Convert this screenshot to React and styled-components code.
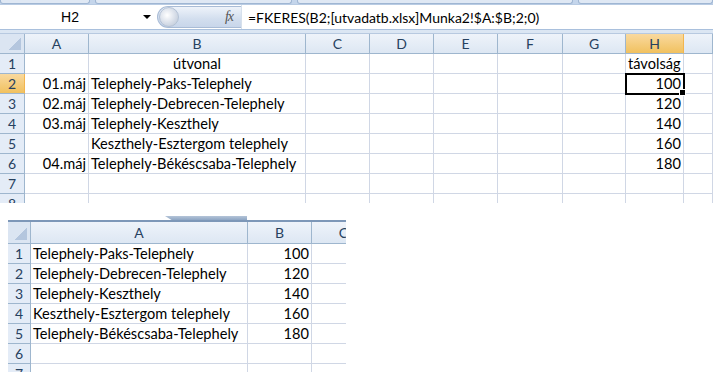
import React from 'react';
import styled, { createGlobalStyle, css } from 'styled-components';

const Global = createGlobalStyle`
  html, body { margin: 0; padding: 0; background: #fff; }
  body { font-family: "Liberation Sans", Arial, sans-serif; }
`;

const Page = styled.div`
  width: 713px;
  height: 372px;
  overflow: hidden;
  display: flex;
  flex-direction: column;
  background: #fff;
`;

const TopStrip = styled.div`
  height: 4px;
  display: flex;
  gap: 5px;
  background: #c4d5eb;
  overflow: hidden;
`;
const StripTab = styled.div`
  width: ${(p) => p.w}px;
  flex-shrink: 0;
  height: 3px;
  background: #dfe8f4;
  border: 1px solid #9fb6d3;
  border-top: none;
  border-radius: 0 0 3px 3px;
`;

const FormulaBar = styled.div`
  height: 24px;
  display: flex;
  align-items: center;
  background: #fff;
  border-top: 1px solid #b8cbe3;
`;
const NameBox = styled.div`
  width: 155px;
  height: 100%;
  display: flex;
  align-items: center;
  font-size: 14px;
  color: #000;
`;
const NameText = styled.span`
  width: 140px;
  text-align: center;
`;
const Arrow = styled.span`
  width: 0;
  height: 0;
  border-left: 4px solid transparent;
  border-right: 4px solid transparent;
  border-top: 4px solid #000;
  margin-left: 3px;
`;
const Pill = styled.div`
  width: 84px;
  height: 22px;
  margin-left: 2px;
  border-radius: 11px 0 0 11px;
  background: linear-gradient(#eef3fa, #d2deee 60%, #c8d6ea);
  border: 1px solid #a9bcd6;
  border-right: none;
  display: flex;
  align-items: center;
  justify-content: space-between;
  padding-right: 8px;
  box-sizing: border-box;
`;
const Knob = styled.span`
  width: 18px;
  height: 18px;
  margin-left: 1px;
  border-radius: 50%;
  background: radial-gradient(circle at 40% 40%, #ffffff, #d6dde8 55%, #b9c4d3);
  border: 1px solid #b4c2d6;
`;
const Fx = styled.span`
  font-family: "Liberation Serif", serif;
  font-style: italic;
  font-size: 14px;
  color: #555;
  letter-spacing: -1px;
`;
const Formula = styled.div`
  flex: 1;
  height: 100%;
  display: flex;
  align-items: center;
  padding-left: 6px;
  font-family: "Lato", "Liberation Sans", sans-serif;
  font-size: 14px;
  color: #000;
  border-left: 1px solid #d6e0ec;
`;

const Band = styled.div`
  height: 3px;
  background: #dbe6f3;
  border-top: 1px solid #a9c0dd;
  border-bottom: 1px solid #b7c9e0;
`;

const Sheet = styled.div`
  display: grid;
  grid-template-columns: ${(p) => p.cols};
  grid-auto-rows: 20px;
  height: ${(p) => p.h}px;
  overflow: hidden;
  font-family: "Lato", "Liberation Sans", sans-serif;
  font-size: 14.6px;
  ${(p) =>
    p.headerH &&
    css`
      grid-template-rows: ${p.headerH}px;
    `}
`;

const Head = styled.div`
  background: ${(p) =>
    p.sel
      ? 'linear-gradient(#f9d99f, #f1c15f)'
      : 'linear-gradient(#eef3fa, #dde7f3)'};
  border-right: 1px solid ${(p) => (p.sel ? '#f2b54f' : '#9eb6ce')};
  border-bottom: 1px solid #9eb6ce;
  color: #27415f;
  font-size: 14px;
  display: flex;
  align-items: center;
  justify-content: center;
  overflow: hidden;
  white-space: nowrap;
`;
const RowHead = styled(Head)`
  background: ${(p) => (p.sel ? 'linear-gradient(#f9d99f, #f1c15f)' : '#e4ecf7')};
`;
const Corner = styled.div`
  background: #dbe5f2;
  border-right: 1px solid #9eb6ce;
  border-bottom: 1px solid #9eb6ce;
  position: relative;
  &::after {
    content: '';
    position: absolute;
    right: 3px;
    bottom: 3px;
    width: 12px;
    height: 12px;
    background: linear-gradient(135deg, transparent 50%, #b4c6de 50%);
  }
`;
const Cell = styled.div`
  border-right: 1px solid #d0d7e5;
  border-bottom: 1px solid #d0d7e5;
  padding: 0 2px;
  display: flex;
  align-items: center;
  justify-content: ${(p) => (p.align === 'right' ? 'flex-end' : p.align === 'center' ? 'center' : 'flex-start')};
  white-space: nowrap;
  color: #000;
  position: relative;
  ${(p) =>
    p.active &&
    css`
      outline: 2px solid #000;
      outline-offset: -1px;
      z-index: 1;
      &::after {
        content: '';
        position: absolute;
        right: -3px;
        bottom: -3px;
        width: 5px;
        height: 5px;
        background: #000;
        border: 1px solid #fff;
      }
    `}
`;

const Gap = styled.div`
  height: 13px;
`;

const Window = styled.div`
  margin-left: 8px;
  width: 338px;
  flex: 1;
  display: flex;
  flex-direction: column;
  overflow: hidden;
`;
const WinTop = styled.div`
  height: 4px;
  display: flex;
  border-bottom: 2px solid #7d97b8;
`;
const Split = styled.div`
  margin-left: 157px;
  width: 82px;
  height: 4px;
  background: linear-gradient(#b4c4d8, #8ea6c4);
  clip-path: polygon(0 0, 100% 0, 100% 100%, 8% 100%);
`;

const COLS1 = ['A', 'B', 'C', 'D', 'E', 'F', 'G', 'H', ''];
const rows1 = [
  ['', 'útvonal', 'távolság'],
  ['01.máj', 'Telephely-Paks-Telephely', '100'],
  ['02.máj', 'Telephely-Debrecen-Telephely', '120'],
  ['03.máj', 'Telephely-Keszthely', '140'],
  ['', 'Keszthely-Esztergom telephely', '160'],
  ['04.máj', 'Telephely-Békéscsaba-Telephely', '180'],
  ['', '', ''],
  ['', '', ''],
];

const rows2 = [
  ['Telephely-Paks-Telephely', '100'],
  ['Telephely-Debrecen-Telephely', '120'],
  ['Telephely-Keszthely', '140'],
  ['Keszthely-Esztergom telephely', '160'],
  ['Telephely-Békéscsaba-Telephely', '180'],
  ['', ''],
  ['', ''],
];

export default function App() {
  return (
    <Page>
      <Global />
      <TopStrip>
        <StripTab w={88} />
        <StripTab w={195} />
        <StripTab w={274} />
        <StripTab w={133} />
        <StripTab w={40} />
      </TopStrip>
      <FormulaBar>
        <NameBox>
          <NameText>H2</NameText>
          <Arrow />
        </NameBox>
        <Pill>
          <Knob />
          <Fx>fx</Fx>
        </Pill>
        <Formula>=FKERES(B2;[utvadatb.xlsx]Munka2!$A:$B;2;0)</Formula>
      </FormulaBar>
      <Band />
      <Sheet cols="25px 64px 217px 64px 64px 64px 65px 63px 58px 1fr" h={169}>
        <Corner />
        {COLS1.map((c, i) => (
          <Head key={i} sel={c === 'H'}>
            {c}
          </Head>
        ))}
        {rows1.map((r, i) => (
          <React.Fragment key={i}>
            <RowHead sel={i === 1}>{i + 1}</RowHead>
            <Cell align="right">{r[0]}</Cell>
            <Cell align={i === 0 ? 'center' : 'left'}>{r[1]}</Cell>
            <Cell />
            <Cell />
            <Cell />
            <Cell />
            <Cell />
            <Cell align={i === 0 ? 'left' : 'right'} active={i === 1}>
              {r[2]}
            </Cell>
            <Cell />
          </React.Fragment>
        ))}
      </Sheet>
      <Gap />
      <Window>
        <WinTop>
          <Split />
        </WinTop>
        <Sheet cols="23px 217px 64px 64px" h={160} headerH={22}>
          <Corner />
          <Head>A</Head>
          <Head>B</Head>
          <Head>C</Head>
          {rows2.map((r, i) => (
            <React.Fragment key={i}>
              <RowHead>{i + 1}</RowHead>
              <Cell>{r[0]}</Cell>
              <Cell align="right">{r[1]}</Cell>
              <Cell />
            </React.Fragment>
          ))}
        </Sheet>
      </Window>
    </Page>
  );
}
